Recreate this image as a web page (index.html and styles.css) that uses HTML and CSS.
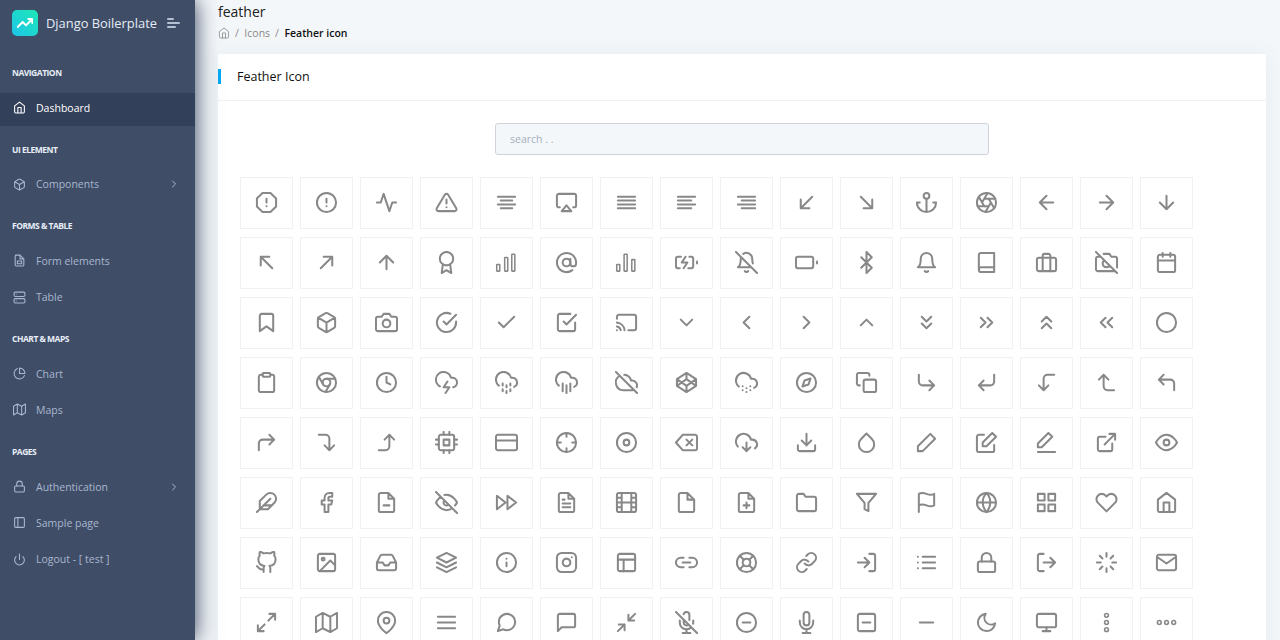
FILE: index.html
```html
<!DOCTYPE html>
<html lang="en">
<head>
<meta charset="utf-8">
<title>Feather icon</title>
<link rel="stylesheet" href="styles.css">
</head>
<body>
<div class="app">
<aside class="sidebar">
  <div class="brand">
    <span class="logo"><svg class="fi logo-ic" viewBox="0 0 24 24"><path d="M23 6l-9.5 9.5-5-5L1 18M17 6h6v6"/></svg></span>
    <span class="brand-name">Django Boilerplate</span>
    <span class="toggle"><i class="t1"></i><i class="t2"></i><i class="t3"></i></span>
  </div>
  <nav>
    <div class="nav-label">Navigation</div>
    <a class="nav-item active"><svg class="fi" viewBox="0 0 24 24"><path d="M3 9l9-7 9 7v11a2 2 0 0 1-2 2H5a2 2 0 0 1-2-2zM9 22V12h6v10"/></svg><span>Dashboard</span></a>
    <div class="nav-label">UI Element</div>
    <a class="nav-item"><svg class="fi" viewBox="0 0 24 24"><path d="M21 16V8a2 2 0 0 0-1-1.73l-7-4a2 2 0 0 0-2 0l-7 4A2 2 0 0 0 3 8v8a2 2 0 0 0 1 1.73l7 4a2 2 0 0 0 2 0l7-4A2 2 0 0 0 21 16zM3.27 6.96L12 12.01l8.73-5.05M12 22.08V12"/></svg><span>Components</span><svg class="fi caret" viewBox="0 0 24 24"><path d="M9 18l6-6-6-6"/></svg></a>
    <div class="nav-label">Forms &amp; Table</div>
    <a class="nav-item"><svg class="fi" viewBox="0 0 24 24"><path d="M13 2H6a2 2 0 0 0-2 2v16a2 2 0 0 0 2 2h12a2 2 0 0 0 2-2V9zM13 2v7h7M8 13h8v5H8z"/></svg><span>Form elements</span></a>
    <a class="nav-item"><svg class="fi" viewBox="0 0 24 24"><rect x="2" y="2" width="20" height="8" rx="2"/><rect x="2" y="14" width="20" height="8" rx="2"/><path d="M6 6h.01M6 18h.01"/></svg><span>Table</span></a>
    <div class="nav-label">Chart &amp; Maps</div>
    <a class="nav-item"><svg class="fi" viewBox="0 0 24 24"><path d="M21.21 15.89A10 10 0 1 1 8 2.83M22 12A10 10 0 0 0 12 2v10z"/></svg><span>Chart</span></a>
    <a class="nav-item"><svg class="fi" viewBox="0 0 24 24"><path d="M1 6v16l7-4 8 4 7-4V2l-7 4-8-4zM8 2v16M16 6v16"/></svg><span>Maps</span></a>
    <div class="nav-label">Pages</div>
    <a class="nav-item"><svg class="fi" viewBox="0 0 24 24"><rect x="3" y="11" width="18" height="11" rx="2"/><path d="M7 11V7a5 5 0 0 1 10 0v4"/></svg><span>Authentication</span><svg class="fi caret" viewBox="0 0 24 24"><path d="M9 18l6-6-6-6"/></svg></a>
    <a class="nav-item"><svg class="fi" viewBox="0 0 24 24"><rect x="3" y="3" width="18" height="18" rx="2"/><path d="M9 3v18"/></svg><span>Sample page</span></a>
    <a class="nav-item"><svg class="fi" viewBox="0 0 24 24"><path d="M18.36 6.64a9 9 0 1 1-12.73 0M12 2v10"/></svg><span>Logout - [ test ]</span></a>
  </nav>
</aside>
<main class="main">
  <header class="page-head">
    <h1 class="page-title">feather</h1>
    <div class="crumbs">
      <svg class="fi crumb-home" viewBox="0 0 24 24"><path d="M3 9l9-7 9 7v11a2 2 0 0 1-2 2H5a2 2 0 0 1-2-2zM9 22V12h6v10"/></svg>
      <span class="sep">/</span><span class="crumb">Icons</span><span class="sep">/</span><span class="crumb-now">Feather icon</span>
    </div>
  </header>
  <section class="card">
    <div class="card-head"><h2 class="card-title">Feather Icon</h2></div>
    <div class="card-body">
      <div class="search-row"><input class="search" type="text" placeholder="search . ."></div>
      <div class="icons">
        <div class="tile"><svg class="fi" viewBox="0 0 24 24"><path d="M7.86 2h8.28L22 7.86v8.28L16.14 22H7.86L2 16.14V7.86zM12 8v4M12 16h.01"/></svg></div>
        <div class="tile"><svg class="fi" viewBox="0 0 24 24"><circle cx="12" cy="12" r="10"/><path d="M12 8v4M12 16h.01"/></svg></div>
        <div class="tile"><svg class="fi" viewBox="0 0 24 24"><path d="M22 12h-4l-3 9L9 3l-3 9H2"/></svg></div>
        <div class="tile"><svg class="fi" viewBox="0 0 24 24"><path d="M10.29 3.86L1.82 18a2 2 0 0 0 1.71 3h16.94a2 2 0 0 0 1.71-3L13.71 3.86a2 2 0 0 0-3.42 0zM12 9v4M12 17h.01"/></svg></div>
        <div class="tile"><svg class="fi" viewBox="0 0 24 24"><path d="M18 10H6M21 6H3M21 14H3M18 18H6"/></svg></div>
        <div class="tile"><svg class="fi" viewBox="0 0 24 24"><path d="M5 17H4a2 2 0 0 1-2-2V5a2 2 0 0 1 2-2h16a2 2 0 0 1 2 2v10a2 2 0 0 1-2 2h-1M12 15l5 6H7z"/></svg></div>
        <div class="tile"><svg class="fi" viewBox="0 0 24 24"><path d="M21 10H3M21 6H3M21 14H3M21 18H3"/></svg></div>
        <div class="tile"><svg class="fi" viewBox="0 0 24 24"><path d="M17 10H3M21 6H3M21 14H3M17 18H3"/></svg></div>
        <div class="tile"><svg class="fi" viewBox="0 0 24 24"><path d="M21 10H7M21 6H3M21 14H3M21 18H7"/></svg></div>
        <div class="tile"><svg class="fi" viewBox="0 0 24 24"><path d="M18 6L6 18M15 18H6V9"/></svg></div>
        <div class="tile"><svg class="fi" viewBox="0 0 24 24"><path d="M6 6l12 12M18 9v9H9"/></svg></div>
        <div class="tile"><svg class="fi" viewBox="0 0 24 24"><circle cx="12" cy="5" r="3"/><path d="M12 22V8M5 12H2a10 10 0 0 0 20 0h-3"/></svg></div>
        <div class="tile"><svg class="fi" viewBox="0 0 24 24"><circle cx="12" cy="12" r="10"/><path d="M14.31 8l5.74 9.94M9.69 8h11.48M7.38 12l5.74-9.94M9.69 16L3.95 6.06M14.31 16H2.83M16.62 12l-5.74 9.94"/></svg></div>
        <div class="tile"><svg class="fi" viewBox="0 0 24 24"><path d="M19 12H5M12 19l-7-7 7-7"/></svg></div>
        <div class="tile"><svg class="fi" viewBox="0 0 24 24"><path d="M5 12h14M12 5l7 7-7 7"/></svg></div>
        <div class="tile"><svg class="fi" viewBox="0 0 24 24"><path d="M12 5v14M19 12l-7 7-7-7"/></svg></div>

        <div class="tile"><svg class="fi" viewBox="0 0 24 24"><path d="M18 18L6 6M6 15V6h9"/></svg></div>
        <div class="tile"><svg class="fi" viewBox="0 0 24 24"><path d="M6 18L18 6M9 6h9v9"/></svg></div>
        <div class="tile"><svg class="fi" viewBox="0 0 24 24"><path d="M12 19V5M5 12l7-7 7 7"/></svg></div>
        <div class="tile"><svg class="fi" viewBox="0 0 24 24"><circle cx="12" cy="8" r="7"/><path d="M8.21 13.89L7 23l5-3 5 3-1.21-9.12"/></svg></div>
        <div class="tile"><svg class="fi bars" viewBox="0 0 24 24"><rect x="1.800" y="14" width="3.200" height="7" rx=".4"/><rect x="10.100" y="6.700" width="3.200" height="14.300" rx=".4"/><rect x="17.500" y="3.400" width="3.200" height="17.600" rx=".4"/></svg></div>
        <div class="tile"><svg class="fi" viewBox="0 0 24 24"><circle cx="12" cy="12" r="4"/><path d="M16 8v5a3 3 0 0 0 6 0v-1a10 10 0 1 0-3.92 7.94"/></svg></div>
        <div class="tile"><svg class="fi bars" viewBox="0 0 24 24"><rect x="1.800" y="14" width="3.200" height="7" rx=".4"/><rect x="9.500" y="3.400" width="3.200" height="17.600" rx=".4"/><rect x="17.500" y="9" width="3.200" height="12" rx=".4"/></svg></div>
        <div class="tile"><svg class="fi" viewBox="0 0 24 24"><path d="M5 18H3a2 2 0 0 1-2-2V8a2 2 0 0 1 2-2h3.19M15 6h2a2 2 0 0 1 2 2v8a2 2 0 0 1-2 2h-3.19M23 13v-2M11 6l-4 6h6l-4 6"/></svg></div>
        <div class="tile"><svg class="fi" viewBox="0 0 24 24"><path d="M13.73 21a2 2 0 0 1-3.46 0M18.63 13A17.89 17.89 0 0 1 18 8M6.26 6.26A5.86 5.86 0 0 0 6 8c0 7-3 9-3 9h14M18 8a6 6 0 0 0-9.33-5M1 1l22 22"/></svg></div>
        <div class="tile"><svg class="fi" viewBox="0 0 24 24"><rect x="1" y="6" width="18" height="12" rx="2"/><path d="M23 13v-2"/></svg></div>
        <div class="tile"><svg class="fi" viewBox="0 0 24 24"><path d="M6.5 6.5l11 11L12 23V1l5.500 5.500-11 11"/></svg></div>
        <div class="tile"><svg class="fi" viewBox="0 0 24 24"><path d="M18 8A6 6 0 0 0 6 8c0 7-3 9-3 9h18s-3-2-3-9M13.730 21a2 2 0 0 1-3.46 0"/></svg></div>
        <div class="tile"><svg class="fi" viewBox="0 0 24 24"><path d="M4 19.500A2.500 2.500 0 0 1 6.500 17H20M6.500 2H20v20H6.500A2.500 2.500 0 0 1 4 19.500v-15A2.500 2.500 0 0 1 6.500 2z"/></svg></div>
        <div class="tile"><svg class="fi" viewBox="0 0 24 24"><rect x="2" y="7" width="20" height="14" rx="2"/><path d="M16 21V5a2 2 0 0 0-2-2h-4a2 2 0 0 0-2 2v16"/></svg></div>
        <div class="tile"><svg class="fi" viewBox="0 0 24 24"><path d="M1 1l22 22M21 21H3a2 2 0 0 1-2-2V8a2 2 0 0 1 2-2h3m3-3h6l2 3h4a2 2 0 0 1 2 2v9.340m-7.720-2.060a4 4 0 1 1-5.560-5.560"/></svg></div>
        <div class="tile"><svg class="fi" viewBox="0 0 24 24"><rect x="3" y="4" width="18" height="18" rx="2"/><path d="M16 2v4M8 2v4M3 10h18"/></svg></div>

        <div class="tile"><svg class="fi" viewBox="0 0 24 24"><path d="M19 21l-7-5-7 5V5a2 2 0 0 1 2-2h10a2 2 0 0 1 2 2z"/></svg></div>
        <div class="tile"><svg class="fi" viewBox="0 0 24 24"><path d="M21 16V8a2 2 0 0 0-1-1.730l-7-4a2 2 0 0 0-2 0l-7 4A2 2 0 0 0 3 8v8a2 2 0 0 0 1 1.730l7 4a2 2 0 0 0 2 0l7-4A2 2 0 0 0 21 16zM3.270 6.960L12 12.010l8.730-5.050M12 22.080V12"/></svg></div>
        <div class="tile"><svg class="fi" viewBox="0 0 24 24"><path d="M23 19a2 2 0 0 1-2 2H3a2 2 0 0 1-2-2V8a2 2 0 0 1 2-2h4l2-3h6l2 3h4a2 2 0 0 1 2 2z"/><circle cx="12" cy="13" r="4"/></svg></div>
        <div class="tile"><svg class="fi" viewBox="0 0 24 24"><path d="M22 11.080V12a10 10 0 1 1-5.930-9.140M22 4L12 14.010l-3-3"/></svg></div>
        <div class="tile"><svg class="fi" viewBox="0 0 24 24"><path d="M20 6L9 17l-5-5"/></svg></div>
        <div class="tile"><svg class="fi" viewBox="0 0 24 24"><path d="M9 11l3 3L22 4M21 12v7a2 2 0 0 1-2 2H5a2 2 0 0 1-2-2V5a2 2 0 0 1 2-2h11"/></svg></div>
        <div class="tile"><svg class="fi" viewBox="0 0 24 24"><path d="M2 16.100A5 5 0 0 1 5.900 20M2 12.050A9 9 0 0 1 9.950 20M2 8V6a2 2 0 0 1 2-2h16a2 2 0 0 1 2 2v12a2 2 0 0 1-2 2h-6M2 20h.01"/></svg></div>
        <div class="tile"><svg class="fi" viewBox="0 0 24 24"><path d="M6 9l6 6 6-6"/></svg></div>
        <div class="tile"><svg class="fi" viewBox="0 0 24 24"><path d="M15 18l-6-6 6-6"/></svg></div>
        <div class="tile"><svg class="fi" viewBox="0 0 24 24"><path d="M9 18l6-6-6-6"/></svg></div>
        <div class="tile"><svg class="fi" viewBox="0 0 24 24"><path d="M18 15l-6-6-6 6"/></svg></div>
        <div class="tile"><svg class="fi" viewBox="0 0 24 24"><path d="M7 13l5 5 5-5M7 6l5 5 5-5"/></svg></div>
        <div class="tile"><svg class="fi" viewBox="0 0 24 24"><path d="M13 17l5-5-5-5M6 17l5-5-5-5"/></svg></div>
        <div class="tile"><svg class="fi" viewBox="0 0 24 24"><path d="M17 11l-5-5-5 5M17 18l-5-5-5 5"/></svg></div>
        <div class="tile"><svg class="fi" viewBox="0 0 24 24"><path d="M11 17l-5-5 5-5M18 17l-5-5 5-5"/></svg></div>
        <div class="tile"><svg class="fi" viewBox="0 0 24 24"><circle cx="12" cy="12" r="10"/></svg></div>

        <div class="tile"><svg class="fi" viewBox="0 0 24 24"><path d="M16 4h2a2 2 0 0 1 2 2v14a2 2 0 0 1-2 2H6a2 2 0 0 1-2-2V6a2 2 0 0 1 2-2h2"/><rect x="8" y="2" width="8" height="4" rx="1"/></svg></div>
        <div class="tile"><svg class="fi" viewBox="0 0 24 24"><circle cx="12" cy="12" r="10"/><circle cx="12" cy="12" r="4"/><path d="M21.170 8H12M3.950 6.060L8.540 14M10.880 21.940L15.460 14"/></svg></div>
        <div class="tile"><svg class="fi" viewBox="0 0 24 24"><circle cx="12" cy="12" r="10"/><path d="M12 6v6l4 2"/></svg></div>
        <div class="tile"><svg class="fi" viewBox="0 0 24 24"><path d="M19 16.900A5 5 0 0 0 18 7h-1.260a8 8 0 1 0-11.620 9M13 11l-4 6h6l-4 6"/></svg></div>
        <div class="tile"><svg class="fi" viewBox="0 0 24 24"><path d="M8 19v2M8 13v2M16 19v2M16 13v2M12 21v2M12 15v2M20 16.580A5 5 0 0 0 18 7h-1.260A8 8 0 1 0 4 15.250"/></svg></div>
        <div class="tile"><svg class="fi" viewBox="0 0 24 24"><path d="M16 13v8M8 13v8M12 15v8M20 16.580A5 5 0 0 0 18 7h-1.260A8 8 0 1 0 4 15.250"/></svg></div>
        <div class="tile"><svg class="fi" viewBox="0 0 24 24"><path d="M22.610 16.950A5 5 0 0 0 18 10h-1.260a8 8 0 0 0-7.050-6M5 5a8 8 0 0 0 4 15h9a5 5 0 0 0 1.700-.3M1 1l22 22"/></svg></div>
        <div class="tile"><svg class="fi" viewBox="0 0 24 24"><path d="M12 2l10 6.500v7L12 22 2 15.500v-7zM12 22v-6.500M22 8.500l-10 7-10-7M2 15.500l10-7 10 7M12 2v6.500"/></svg></div>
        <div class="tile"><svg class="fi" viewBox="0 0 24 24"><path d="M20 17.580A5 5 0 0 0 18 8h-1.260A8 8 0 1 0 4 16.250M8 16h.01M8 20h.01M12 18h.01M12 22h.01M16 16h.01M16 20h.01"/></svg></div>
        <div class="tile"><svg class="fi" viewBox="0 0 24 24"><circle cx="12" cy="12" r="10"/><path d="M16.240 7.760l-2.120 6.360-6.360 2.120 2.120-6.360z"/></svg></div>
        <div class="tile"><svg class="fi" viewBox="0 0 24 24"><rect x="9" y="9" width="13" height="13" rx="2"/><path d="M5 15H4a2 2 0 0 1-2-2V4a2 2 0 0 1 2-2h9a2 2 0 0 1 2 2v1"/></svg></div>
        <div class="tile"><svg class="fi" viewBox="0 0 24 24"><path d="M15 10l5 5-5 5M4 4v7a4 4 0 0 0 4 4h12"/></svg></div>
        <div class="tile"><svg class="fi" viewBox="0 0 24 24"><path d="M9 10l-5 5 5 5M20 4v7a4 4 0 0 1-4 4H4"/></svg></div>
        <div class="tile"><svg class="fi" viewBox="0 0 24 24"><path d="M14 15l-5 5-5-5M20 4h-7a4 4 0 0 0-4 4v12"/></svg></div>
        <div class="tile"><svg class="fi" viewBox="0 0 24 24"><path d="M14 9L9 4 4 9M20 20h-7a4 4 0 0 1-4-4V4"/></svg></div>
        <div class="tile"><svg class="fi" viewBox="0 0 24 24"><path d="M9 14L4 9l5-5M20 20v-7a4 4 0 0 0-4-4H4"/></svg></div>

        <div class="tile"><svg class="fi" viewBox="0 0 24 24"><path d="M15 14l5-5-5-5M4 20v-7a4 4 0 0 1 4-4h12"/></svg></div>
        <div class="tile"><svg class="fi" viewBox="0 0 24 24"><path d="M10 15l5 5 5-5M4 4h7a4 4 0 0 1 4 4v12"/></svg></div>
        <div class="tile"><svg class="fi" viewBox="0 0 24 24"><path d="M10 9l5-5 5 5M4 20h7a4 4 0 0 0 4-4V4"/></svg></div>
        <div class="tile"><svg class="fi" viewBox="0 0 24 24"><rect x="4" y="4" width="16" height="16" rx="2"/><rect x="9" y="9" width="6" height="6"/><path d="M9 1v3M15 1v3M9 20v3M15 20v3M20 9h3M20 14h3M1 9h3M1 14h3"/></svg></div>
        <div class="tile"><svg class="fi" viewBox="0 0 24 24"><rect x="1" y="4" width="22" height="16" rx="2"/><path d="M1 10h22"/></svg></div>
        <div class="tile"><svg class="fi" viewBox="0 0 24 24"><circle cx="12" cy="12" r="10"/><path d="M22 12h-4M6 12H2M12 6V2M12 22v-4"/></svg></div>
        <div class="tile"><svg class="fi" viewBox="0 0 24 24"><circle cx="12" cy="12" r="10"/><circle cx="12" cy="12" r="3"/></svg></div>
        <div class="tile"><svg class="fi" viewBox="0 0 24 24"><path d="M21 4H8l-7 8 7 8h13a2 2 0 0 0 2-2V6a2 2 0 0 0-2-2zM18 9l-6 6M12 9l6 6"/></svg></div>
        <div class="tile"><svg class="fi" viewBox="0 0 24 24"><path d="M8 17l4 4 4-4M12 12v9M20.880 18.090A5 5 0 0 0 18 9h-1.260A8 8 0 1 0 3 16.290"/></svg></div>
        <div class="tile"><svg class="fi" viewBox="0 0 24 24"><path d="M21 15v4a2 2 0 0 1-2 2H5a2 2 0 0 1-2-2v-4M7 10l5 5 5-5M12 15V3"/></svg></div>
        <div class="tile"><svg class="fi" viewBox="0 0 24 24"><path d="M12 2.690l5.660 5.660a8 8 0 1 1-11.310 0z"/></svg></div>
        <div class="tile"><svg class="fi" viewBox="0 0 24 24"><path d="M16 3l5 5L8 21H3v-5z"/></svg></div>
        <div class="tile"><svg class="fi" viewBox="0 0 24 24"><path d="M20 14.660V20a2 2 0 0 1-2 2H4a2 2 0 0 1-2-2V6a2 2 0 0 1 2-2h5.340M18 2l4 4-10 10H8v-4z"/></svg></div>
        <div class="tile"><svg class="fi" viewBox="0 0 24 24"><path d="M14 2l4 4L7 17H3v-4zM3 22h18"/></svg></div>
        <div class="tile"><svg class="fi" viewBox="0 0 24 24"><path d="M18 13v6a2 2 0 0 1-2 2H5a2 2 0 0 1-2-2V8a2 2 0 0 1 2-2h6M15 3h6v6M10 14L21 3"/></svg></div>
        <div class="tile"><svg class="fi" viewBox="0 0 24 24"><path d="M1 12s4-8 11-8 11 8 11 8-4 8-11 8-11-8-11-8z"/><circle cx="12" cy="12" r="3"/></svg></div>

        <div class="tile"><svg class="fi" viewBox="0 0 24 24"><path d="M20.240 12.240a6 6 0 0 0-8.490-8.490L5 10.500V19h8.500zM16 8L2 22M17.500 15H9"/></svg></div>
        <div class="tile"><svg class="fi" viewBox="0 0 24 24"><path d="M18 2h-3a5 5 0 0 0-5 5v3H7v4h3v8h4v-8h3l1-4h-4V7a1 1 0 0 1 1-1h3z"/></svg></div>
        <div class="tile"><svg class="fi" viewBox="0 0 24 24"><path d="M14 2H6a2 2 0 0 0-2 2v16a2 2 0 0 0 2 2h12a2 2 0 0 0 2-2V8zM14 2v6h6M9 15h6"/></svg></div>
        <div class="tile"><svg class="fi" viewBox="0 0 24 24"><path d="M17.940 17.940A10.070 10.070 0 0 1 12 20c-7 0-11-8-11-8a18.450 18.450 0 0 1 5.060-5.940M9.900 4.240A9.120 9.120 0 0 1 12 4c7 0 11 8 11 8a18.500 18.500 0 0 1-2.160 3.190m-6.720-1.070a3 3 0 1 1-4.240-4.240M1 1l22 22"/></svg></div>
        <div class="tile"><svg class="fi" viewBox="0 0 24 24"><path d="M13 19l9-7-9-7zM2 19l9-7-9-7z"/></svg></div>
        <div class="tile"><svg class="fi" viewBox="0 0 24 24"><path d="M14 2H6a2 2 0 0 0-2 2v16a2 2 0 0 0 2 2h12a2 2 0 0 0 2-2V8zM14 2v6h6M16 13H8M16 17H8M10 9H8"/></svg></div>
        <div class="tile"><svg class="fi" viewBox="0 0 24 24"><rect x="2" y="2" width="20" height="20" rx="2.180"/><path d="M7 2v20M17 2v20M2 12h20M2 7h5M2 17h5M17 17h5M17 7h5"/></svg></div>
        <div class="tile"><svg class="fi" viewBox="0 0 24 24"><path d="M13 2H6a2 2 0 0 0-2 2v16a2 2 0 0 0 2 2h12a2 2 0 0 0 2-2V9zM13 2v7h7"/></svg></div>
        <div class="tile"><svg class="fi" viewBox="0 0 24 24"><path d="M14 2H6a2 2 0 0 0-2 2v16a2 2 0 0 0 2 2h12a2 2 0 0 0 2-2V8zM14 2v6h6M12 18v-6M9 15h6"/></svg></div>
        <div class="tile"><svg class="fi" viewBox="0 0 24 24"><path d="M22 19a2 2 0 0 1-2 2H4a2 2 0 0 1-2-2V5a2 2 0 0 1 2-2h5l2 3h9a2 2 0 0 1 2 2z"/></svg></div>
        <div class="tile"><svg class="fi" viewBox="0 0 24 24"><path d="M22 3H2l8 9.460V19l4 2v-8.540z"/></svg></div>
        <div class="tile"><svg class="fi" viewBox="0 0 24 24"><path d="M4 15s1-1 4-1 5 2 8 2 4-1 4-1V3s-1 1-4 1-5-2-8-2-4 1-4 1zM4 22v-7"/></svg></div>
        <div class="tile"><svg class="fi" viewBox="0 0 24 24"><circle cx="12" cy="12" r="10"/><path d="M2 12h20M12 2a15.300 15.300 0 0 1 4 10 15.300 15.300 0 0 1-4 10 15.300 15.300 0 0 1-4-10 15.300 15.300 0 0 1 4-10z"/></svg></div>
        <div class="tile"><svg class="fi" viewBox="0 0 24 24"><rect x="3" y="3" width="7" height="7"/><rect x="14" y="3" width="7" height="7"/><rect x="14" y="14" width="7" height="7"/><rect x="3" y="14" width="7" height="7"/></svg></div>
        <div class="tile"><svg class="fi" viewBox="0 0 24 24"><path d="M20.840 4.610a5.500 5.500 0 0 0-7.780 0L12 5.670l-1.060-1.060a5.500 5.500 0 0 0-7.780 7.780l1.060 1.060L12 21.230l7.780-7.780 1.060-1.060a5.500 5.500 0 0 0 0-7.780z"/></svg></div>
        <div class="tile"><svg class="fi" viewBox="0 0 24 24"><path d="M3 9l9-7 9 7v11a2 2 0 0 1-2 2H5a2 2 0 0 1-2-2zM9 22V12h6v10"/></svg></div>

        <div class="tile"><svg class="fi" viewBox="0 0 24 24"><path d="M9 19c-5 1.500-5-2.500-7-3m14 6v-3.870a3.370 3.370 0 0 0-.94-2.610c3.140-.35 6.440-1.540 6.440-7A5.440 5.440 0 0 0 20 4.770 5.070 5.070 0 0 0 19.910 1S18.730.65 16 2.480a13.380 13.380 0 0 0-7 0C6.270.65 5.090 1 5.090 1A5.070 5.070 0 0 0 5 4.770a5.440 5.440 0 0 0-1.500 3.780c0 5.420 3.300 6.610 6.440 7A3.370 3.370 0 0 0 9 18.130V22"/></svg></div>
        <div class="tile"><svg class="fi" viewBox="0 0 24 24"><rect x="3" y="3" width="18" height="18" rx="2"/><circle cx="8.500" cy="8.500" r="1.500"/><path d="M21 15l-5-5L5 21"/></svg></div>
        <div class="tile"><svg class="fi" viewBox="0 0 24 24"><path d="M22 12h-6l-2 3h-4l-2-3H2M5.450 5.110L2 12v6a2 2 0 0 0 2 2h16a2 2 0 0 0 2-2v-6l-3.450-6.890A2 2 0 0 0 16.760 4H7.240a2 2 0 0 0-1.790 1.110z"/></svg></div>
        <div class="tile"><svg class="fi" viewBox="0 0 24 24"><path d="M12 2L2 7l10 5 10-5zM2 17l10 5 10-5M2 12l10 5 10-5"/></svg></div>
        <div class="tile"><svg class="fi" viewBox="0 0 24 24"><circle cx="12" cy="12" r="10"/><path d="M12 16v-4M12 8h.01"/></svg></div>
        <div class="tile"><svg class="fi" viewBox="0 0 24 24"><rect x="2" y="2" width="20" height="20" rx="5"/><path d="M16 11.370A4 4 0 1 1 12.630 8 4 4 0 0 1 16 11.370zM17.500 6.500h.01"/></svg></div>
        <div class="tile"><svg class="fi" viewBox="0 0 24 24"><rect x="3" y="3" width="18" height="18" rx="2"/><path d="M3 9h18M9 21V9"/></svg></div>
        <div class="tile"><svg class="fi" viewBox="0 0 24 24"><path d="M15 7h3a5 5 0 0 1 5 5 5 5 0 0 1-5 5h-3m-6 0H6a5 5 0 0 1-5-5 5 5 0 0 1 5-5h3M8 12h8"/></svg></div>
        <div class="tile"><svg class="fi" viewBox="0 0 24 24"><circle cx="12" cy="12" r="10"/><circle cx="12" cy="12" r="4"/><path d="M4.930 4.930l4.240 4.240M14.830 14.830l4.240 4.240M14.830 9.170l4.240-4.240M4.930 19.070l4.240-4.240"/></svg></div>
        <div class="tile"><svg class="fi" viewBox="0 0 24 24"><path d="M10 13a5 5 0 0 0 7.540.54l3-3a5 5 0 0 0-7.070-7.070l-1.720 1.710M14 11a5 5 0 0 0-7.540-.54l-3 3a5 5 0 0 0 7.070 7.070l1.710-1.710"/></svg></div>
        <div class="tile"><svg class="fi" viewBox="0 0 24 24"><path d="M15 3h4a2 2 0 0 1 2 2v14a2 2 0 0 1-2 2h-4M10 17l5-5-5-5M15 12H3"/></svg></div>
        <div class="tile"><svg class="fi" viewBox="0 0 24 24"><path d="M8 6h13M8 12h13M8 18h13M3 6h.01M3 12h.01M3 18h.01"/></svg></div>
        <div class="tile"><svg class="fi" viewBox="0 0 24 24"><rect x="3" y="11" width="18" height="11" rx="2"/><path d="M7 11V7a5 5 0 0 1 10 0v4"/></svg></div>
        <div class="tile"><svg class="fi" viewBox="0 0 24 24"><path d="M9 21H5a2 2 0 0 1-2-2V5a2 2 0 0 1 2-2h4M16 17l5-5-5-5M21 12H9"/></svg></div>
        <div class="tile"><svg class="fi" viewBox="0 0 24 24"><path d="M12 2v4M12 18v4M4.930 4.930l2.830 2.830M16.240 16.240l2.830 2.830M2 12h4M18 12h4M4.930 19.070l2.830-2.830M16.240 7.760l2.830-2.830"/></svg></div>
        <div class="tile"><svg class="fi" viewBox="0 0 24 24"><path d="M4 4h16c1.100 0 2 .9 2 2v12c0 1.100-.9 2-2 2H4c-1.100 0-2-.9-2-2V6c0-1.100.9-2 2-2zM22 6l-10 7L2 6"/></svg></div>

        <div class="tile"><svg class="fi" viewBox="0 0 24 24"><path d="M15 3h6v6M9 21H3v-6M21 3l-7 7M3 21l7-7"/></svg></div>
        <div class="tile"><svg class="fi" viewBox="0 0 24 24"><path d="M1 6v16l7-4 8 4 7-4V2l-7 4-8-4zM8 2v16M16 6v16"/></svg></div>
        <div class="tile"><svg class="fi" viewBox="0 0 24 24"><path d="M21 10c0 7-9 13-9 13s-9-6-9-13a9 9 0 0 1 18 0z"/><circle cx="12" cy="10" r="3"/></svg></div>
        <div class="tile"><svg class="fi" viewBox="0 0 24 24"><path d="M3 12h18M3 6h18M3 18h18"/></svg></div>
        <div class="tile"><svg class="fi" viewBox="0 0 24 24"><path d="M21 11.500a8.380 8.380 0 0 1-.9 3.800 8.500 8.500 0 0 1-7.600 4.700 8.380 8.380 0 0 1-3.800-.9L3 21l1.900-5.700a8.380 8.380 0 0 1-.9-3.800 8.500 8.500 0 0 1 4.700-7.600 8.380 8.380 0 0 1 3.800-.9h.5a8.480 8.480 0 0 1 8 8v.5z"/></svg></div>
        <div class="tile"><svg class="fi" viewBox="0 0 24 24"><path d="M21 15a2 2 0 0 1-2 2H7l-4 4V5a2 2 0 0 1 2-2h14a2 2 0 0 1 2 2z"/></svg></div>
        <div class="tile"><svg class="fi" viewBox="0 0 24 24"><path d="M4 14h6v6M20 10h-6V4M14 10l7-7M3 21l7-7"/></svg></div>
        <div class="tile"><svg class="fi" viewBox="0 0 24 24"><path d="M1 1l22 22M9 9v3a3 3 0 0 0 5.120 2.120M15 9.340V4a3 3 0 0 0-5.940-.6M17 16.950A7 7 0 0 1 5 12v-2m14 0v2a7 7 0 0 1-.11 1.230M12 19v4M8 23h8"/></svg></div>
        <div class="tile"><svg class="fi" viewBox="0 0 24 24"><circle cx="12" cy="12" r="10"/><path d="M8 12h8"/></svg></div>
        <div class="tile"><svg class="fi" viewBox="0 0 24 24"><path d="M12 1a3 3 0 0 0-3 3v8a3 3 0 0 0 6 0V4a3 3 0 0 0-3-3zM19 10v2a7 7 0 0 1-14 0v-2M12 19v4M8 23h8"/></svg></div>
        <div class="tile"><svg class="fi" viewBox="0 0 24 24"><rect x="3" y="3" width="18" height="18" rx="2"/><path d="M8 12h8"/></svg></div>
        <div class="tile"><svg class="fi" viewBox="0 0 24 24"><path d="M5 12h14"/></svg></div>
        <div class="tile"><svg class="fi" viewBox="0 0 24 24"><path d="M21 12.790A9 9 0 1 1 11.210 3 7 7 0 0 0 21 12.790z"/></svg></div>
        <div class="tile"><svg class="fi" viewBox="0 0 24 24"><rect x="2" y="3" width="20" height="14" rx="2"/><path d="M8 21h8M12 17v4"/></svg></div>
        <div class="tile"><svg class="fi bars" viewBox="0 0 24 24"><circle cx="12" cy="12" r="2"/><circle cx="12" cy="4.500" r="2"/><circle cx="12" cy="19.500" r="2"/></svg></div>
        <div class="tile"><svg class="fi bars" viewBox="0 0 24 24"><circle cx="12" cy="12" r="2"/><circle cx="4.500" cy="12" r="2"/><circle cx="19.500" cy="12" r="2"/></svg></div>
      </div>
    </div>
  </section>
</main>
</div>
</body>
</html>
```
FILE: styles.css
```css
* { box-sizing: border-box; }
html, body { margin: 0; height: 640px; overflow: hidden; }
body { font-family: "Open Sans", sans-serif; background: #f4f7fa; color: #111; }
.fi { fill: none; stroke: currentColor; stroke-width: 2; stroke-linecap: round; stroke-linejoin: round; display: block; }
.fi.bars { stroke-width: 1.5; }
.app { display: flex; height: 640px; }

.sidebar { width: 195px; flex: none; background: #3f4d67; color: #a9b7d0; box-shadow: 1px 0 20px 0 #3f4d67; position: relative; z-index: 2; }
.brand { height: 52px; display: flex; align-items: center; padding: 0 14px 6px 12px; }
.logo { width: 26px; height: 26px; border-radius: 5px; background: linear-gradient(-135deg, #1de9b6 0%, #1dc4e9 100%); display: flex; align-items: center; justify-content: center; color: #fff; flex: none; }
.logo-ic { width: 16px; height: 16px; stroke-width: 3; }
.brand-name { margin-left: 8px; font-size: 12.9px; color: #e6ecf5; white-space: nowrap; }
.toggle { margin-left: 10px; display: flex; flex-direction: column; gap: 2px; width: 13px; }
.toggle i { display: block; height: 2px; background: #b5c0d3; border-radius: 1px; }
.toggle .t1 { width: 7px; }
.toggle .t2 { width: 13px; }
.toggle .t3 { width: 9px; }

.nav-label { padding: 15px 12px 13.5px; font-size: 8.5px; line-height: 12px; font-weight: 700; letter-spacing: -.5px; text-transform: uppercase; color: #e8edf7; }
.nav-item { height: 33px; margin-bottom: 3.2px; display: flex; align-items: center; padding: 0 12px 3px 13px; font-size: 10.5px; color: #a9b7d0; }
.nav-item .fi { width: 13px; height: 13px; flex: none; }
.nav-item span { margin-left: 10px; flex: 1; white-space: nowrap; }
.nav-item .caret { width: 12px; height: 12px; margin-right: 3px; }
.nav-item.active { background: #33405a; color: #fff; }

.main { flex: 1; min-width: 0; padding: 0 14px 0 23px; }
.page-head { height: 54px; padding-top: 3px; }
.page-title { margin: 0; font-size: 14px; line-height: 18px; font-weight: 400; color: #222; }
.crumbs { display: flex; align-items: center; margin-top: 4px; font-size: 10.5px; line-height: 16px; color: #888; }
.crumb-home { width: 12px; height: 12px; stroke-width: 1.6; }
.sep { margin: 0 5.5px 0 5px; }
.crumb-now { color: #111; font-weight: 600; }

.card { background: #fff; height: 700px; box-shadow: 0 1px 20px 0 rgba(69,90,100,.08); }
.card-head { height: 47px; border-bottom: 1px solid #f1f1f1; display: flex; align-items: center; padding: 0 0 2px 19px; position: relative; }
.card-head::before { content: ""; position: absolute; left: 0; top: 15px; width: 3px; height: 15px; background: #04a9f5; }
.card-title { margin: 0; font-size: 12.5px; font-weight: 400; color: #111; }
.card-body { padding: 22px 22px 0; }
.search-row { display: flex; justify-content: center; margin-bottom: 22px; }
.search { width: 494px; height: 32px; padding: 0 14px; background: #f4f7fa; border: 1px solid #ced4da; border-radius: 3px; font: 10.5px "Open Sans", sans-serif; color: #555; }
.search::placeholder { color: #a3aebb; opacity: 1; }
.icons { display: grid; grid-template-columns: repeat(16, 53px); grid-auto-rows: 52px; column-gap: 7px; row-gap: 8px; }
.tile { border: 1px solid #f1f1f1; padding-bottom: 2px; display: flex; align-items: center; justify-content: center; color: #888; }
.tile .fi { width: 23px; height: 23px; stroke-width: 2.1; }
.tile .fi.bars { stroke-width: 1.6; }
```
